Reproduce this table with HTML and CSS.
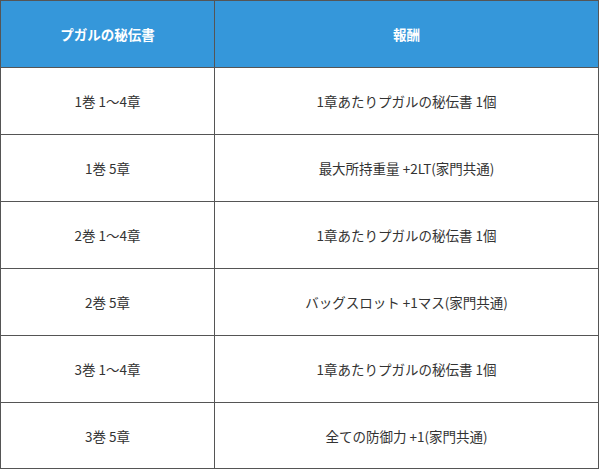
FILE: index.html
```html
<!DOCTYPE html>
<html lang="ja">
<head>
<meta charset="utf-8">
<link rel="stylesheet" href="styles.css">
</head>
<body>
<table class="reward-table">
  <colgroup>
    <col class="col-a">
    <col class="col-b">
  </colgroup>
  <thead>
    <tr><th>プガルの秘伝書</th><th>報酬</th></tr>
  </thead>
  <tbody>
    <tr><td>1巻 1～4章</td><td>1章あたりプガルの秘伝書 1個</td></tr>
    <tr><td>1巻 5章</td><td>最大所持重量 +2LT(家門共通)</td></tr>
    <tr><td>2巻 1～4章</td><td>1章あたりプガルの秘伝書 1個</td></tr>
    <tr><td>2巻 5章</td><td>バッグスロット +1マス(家門共通)</td></tr>
    <tr><td>3巻 1～4章</td><td>1章あたりプガルの秘伝書 1個</td></tr>
    <tr class="last-row"><td>3巻 5章</td><td>全ての防御力 +1(家門共通)</td></tr>
  </tbody>
</table>
</body>
</html>
```

FILE: styles.css
```css
html, body {
  margin: 0;
  padding: 0;
  background: #ffffff;
}

.reward-table {
  width: 599px;
  border-collapse: separate;
  border-spacing: 0;
  table-layout: fixed;
  border-top: 1px solid #555555;
  border-left: 1px solid #555555;
  font-family: "Noto Sans CJK JP", "Noto Sans", sans-serif;
  font-size: 13.5px;
  color: #333333;
}

.col-a { width: 214px; }
.col-b { width: 384px; }

.reward-table th,
.reward-table td {
  border-right: 1px solid #555555;
  border-bottom: 1px solid #555555;
  text-align: center;
  vertical-align: middle;
  padding: 0;
  height: 67px;
  box-sizing: border-box;
}

.reward-table .last-row td {
  height: 66px;
}

.reward-table th {
  background: #3597da;
  color: #ffffff;
  font-weight: 700;
}
```
